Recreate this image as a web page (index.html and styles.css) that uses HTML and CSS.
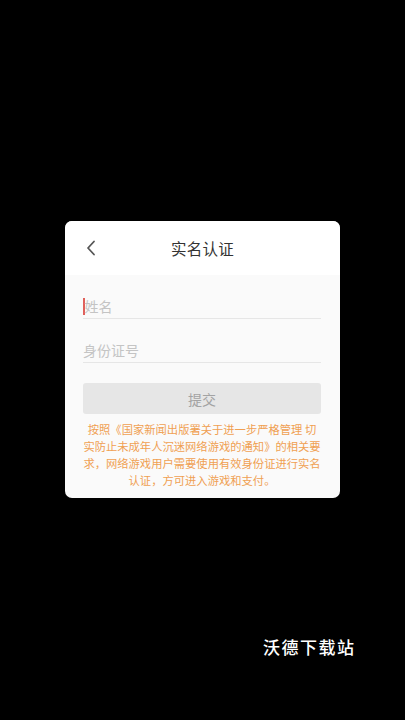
FILE: index.html
```html
<!DOCTYPE html>
<html lang="zh">
<head>
<meta charset="utf-8">
<link rel="stylesheet" href="styles.css">
</head>
<body>
<div class="screen">
  <div class="card">
    <div class="header">
      <span class="back">
        <svg width="12" height="16" viewBox="0 0 12 16"><path d="M9 1.5 L3 8 L9 14.5" fill="none" stroke="#555" stroke-width="1.8" stroke-linecap="round" stroke-linejoin="round"/></svg>
      </span>
      <span class="title">实名认证</span>
    </div>
    <div class="body">
      <div class="field"><span class="caret"></span><span class="ph">姓名</span></div>
      <div class="field"><span class="ph">身份证号</span></div>
      <div class="btn">提交</div>
      <p class="notice">按照《国家新闻出版署关于进一步严格管理 切实防止未成年人沉迷网络游戏的通知》的相关要求，网络游戏用户需要使用有效身份证进行实名认证，方可进入游戏和支付。</p>
    </div>
  </div>
  <div class="watermark">沃德下载站</div>
</div>
</body>
</html>
```

FILE: styles.css
```css
* { box-sizing: border-box; }
html, body { margin: 0; padding: 0; background: #000; }
body { font-family: "Noto Sans CJK SC", "Noto Sans", sans-serif; }
.screen {
  width: 405px;
  height: 720px;
  position: relative;
  padding-top: 221px;
  padding-left: 65px;
}
.card {
  width: 275px;
  height: 277px;
  background: #fafafa;
  border-radius: 7px;
  overflow: hidden;
}
.header {
  height: 54px;
  background: #fff;
  display: flex;
  align-items: center;
  justify-content: center;
  position: relative;
}
.back {
  position: absolute;
  left: 20px;
  top: 19px;
  display: flex;
}
.title {
  font-size: 15.5px;
  color: #333;
  letter-spacing: 0.3px;
}
.body {
  padding: 0 19px 0 18px;
}
.field {
  height: 44px;
  padding-top: 21px;
  border-bottom: 1px solid #e6e6e6;
  display: flex;
  align-items: flex-start;
}
.ph {
  font-size: 14px;
  line-height: 20px;
  color: #c4c4c4;
}
.caret {
  width: 1.5px;
  height: 17px;
  margin-top: 2px;
  background: #e0605a;
}
.btn {
  margin-top: 20px;
  height: 31px;
  background: #e6e6e6;
  border-radius: 3px;
  color: #a3a3a3;
  font-size: 14px;
  display: flex;
  align-items: center;
  justify-content: center;
}
.notice {
  margin: 7px 0 0;
  font-size: 11.3px;
  line-height: 17px;
  color: #f0a052;
  text-align: center;
}
.watermark {
  position: absolute;
  left: 263px;
  top: 634px;
  font-size: 17px;
  letter-spacing: 1.5px;
  color: #fff;
  font-weight: 500;
}
```
